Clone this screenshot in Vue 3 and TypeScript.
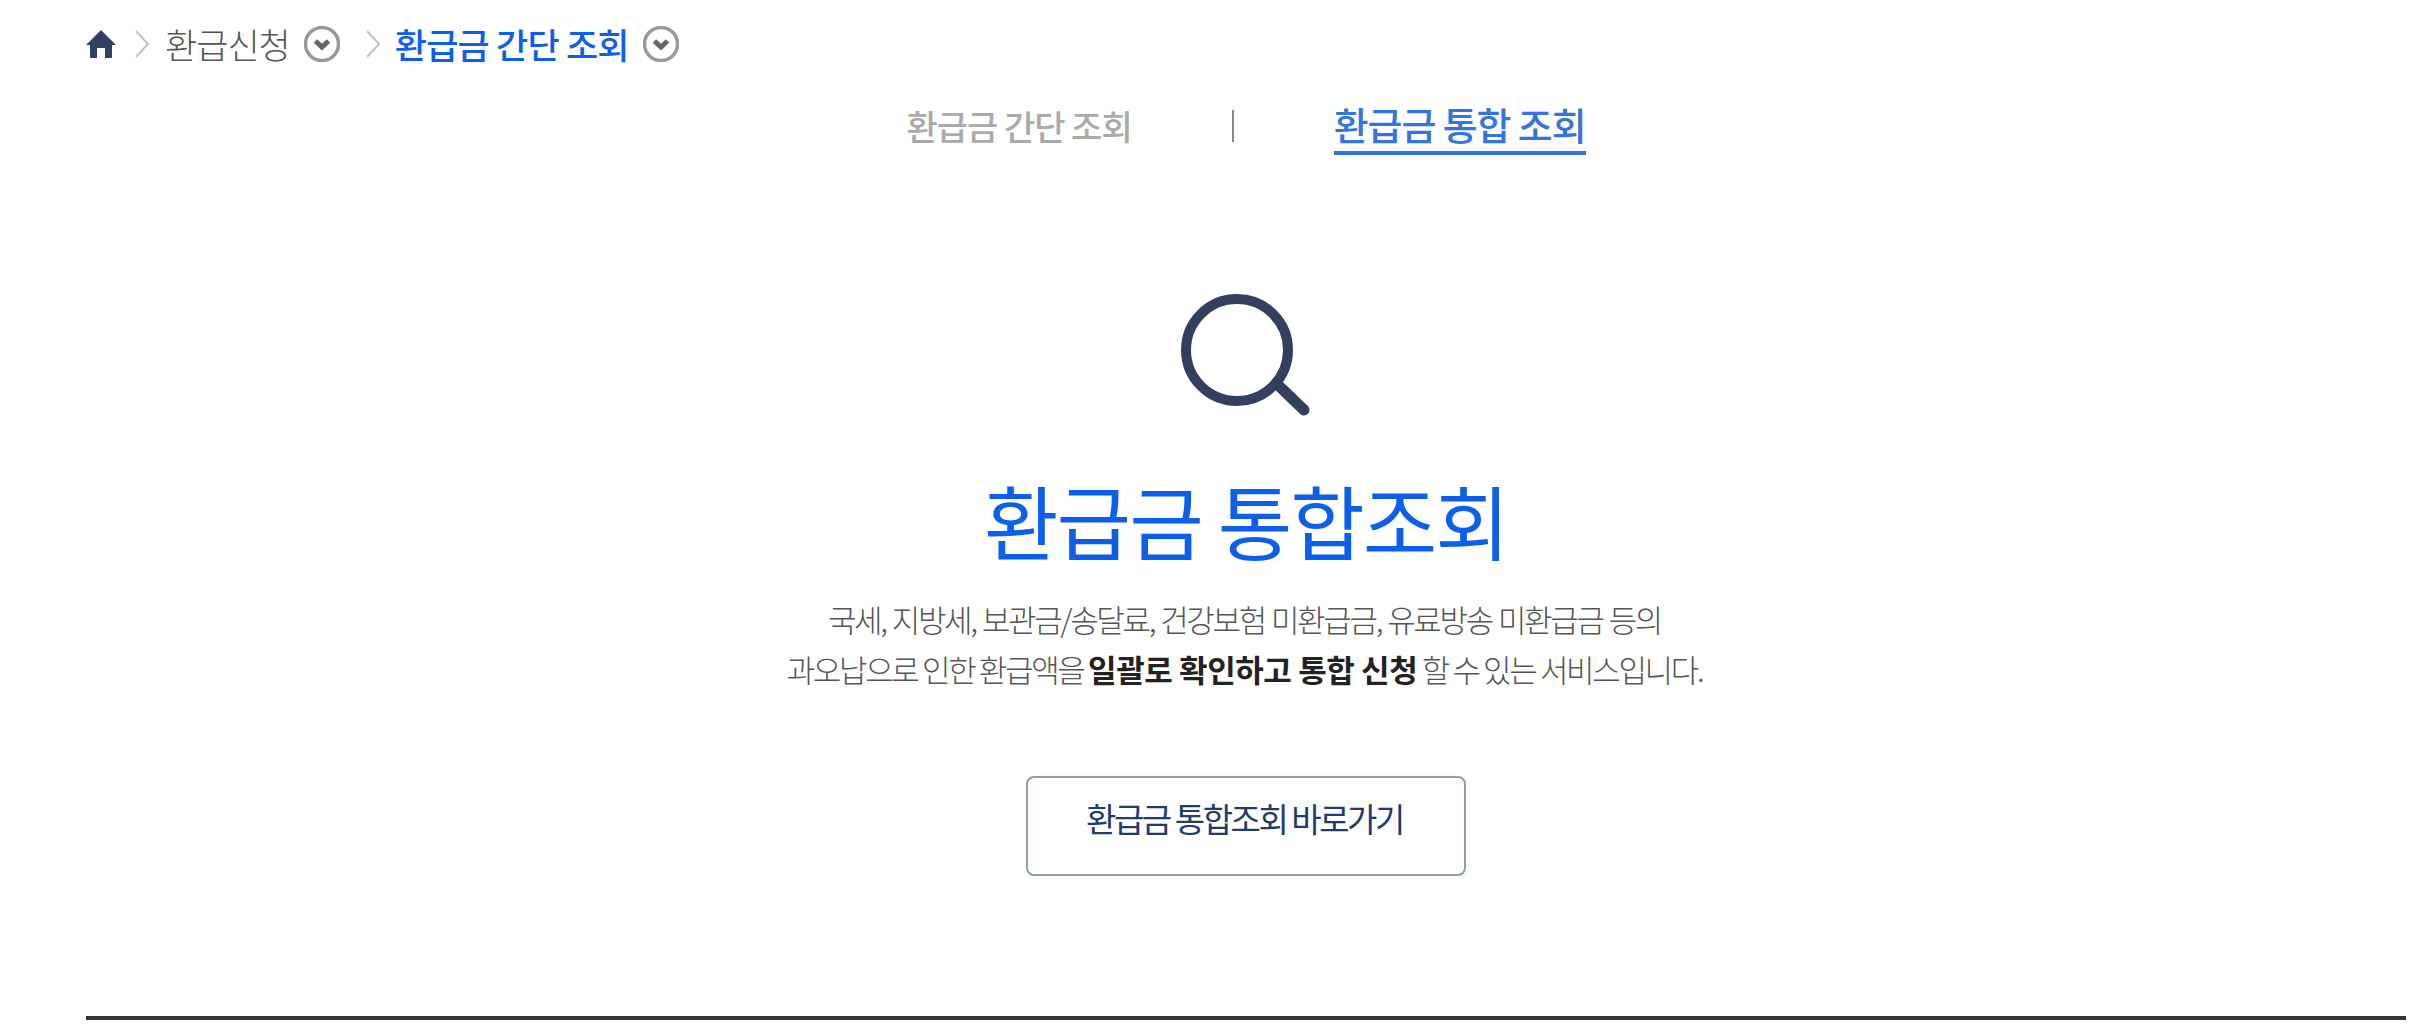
<script setup lang="ts">
// 환급금 통합조회 안내 화면
const lines = ['국세, 지방세, 보관금/송달료, 건강보험 미환급금, 유료방송 미환급금 등의']
</script>

<template>
  <div class="page">
    <nav class="crumbs">
      <svg class="home" viewBox="0 0 30 28" aria-label="홈">
        <path d="M15 0 L30 15 L26 15 L26 27 Q26 28 25 28 L19 28 L19 18 L11 18 L11 28 L5 28 Q4 28 4 27 L4 15 L0 15 Z" fill="#333f5f" />
      </svg>
      <svg class="sep" viewBox="0 0 16 30"><path d="M2 2 L14 15 L2 28" /></svg>
      <span class="crumb">환급신청</span>
      <svg class="drop" viewBox="0 0 36 36">
        <circle cx="18" cy="18" r="16.5" />
        <path d="M11.5 15 L18 21 L24.5 15" />
      </svg>
      <svg class="sep second" viewBox="0 0 16 30"><path d="M2 2 L14 15 L2 28" /></svg>
      <span class="crumb current">환급금 간단 조회</span>
      <svg class="drop" viewBox="0 0 36 36">
        <circle cx="18" cy="18" r="16.5" />
        <path d="M11.5 15 L18 21 L24.5 15" />
      </svg>
    </nav>

    <div class="tabs">
      <a class="tab">환급금 간단 조회</a>
      <i class="bar"></i>
      <a class="tab active">환급금 통합 조회</a>
    </div>

    <section class="intro">
      <svg class="glass" viewBox="0 0 130 122">
        <circle cx="56" cy="56" r="51" />
        <path class="handle" d="M97 91 L123 116" />
      </svg>
      <h1>환급금 통합조회</h1>
      <p>
        <span class="first">{{ lines[0] }}</span><br />
        과오납으로 인한 환급액을 <b>일괄로 확인하고 통합 신청</b> 할 수 있는 서비스입니다.
      </p>
      <button type="button">환급금 통합조회 바로가기</button>
    </section>

    <hr />
  </div>
</template>

<style>
html,
body {
  margin: 0;
  background: #fff;
}
</style>

<style scoped>
.page {
  box-sizing: border-box;
  width: 2432px;
  height: 1036px;
  padding: 22px 26px 0 86px;
  font-family: "Noto Sans CJK KR", "Noto Sans", sans-serif;
  display: flex;
  flex-direction: column;
}

.crumbs {
  display: flex;
  align-items: center;
  height: 44px;
}

.home {
  width: 30px;
  height: 28px;
}

.sep {
  width: 16px;
  height: 30px;
  margin: 0 15px 0 18px;
  fill: none;
  stroke: #c4c4c4;
  stroke-width: 2;
}

.sep.second {
  margin: 0 14px 0 25px;
}

.crumb {
  font-size: 35px;
  line-height: 44px;
  letter-spacing: -1px;
  color: #555;
  font-weight: 300;
}

.crumb.current {
  color: #0b5fe8;
  font-weight: 500;
  letter-spacing: -0.8px;
}

.drop {
  width: 36px;
  height: 36px;
  margin-left: 14px;
  fill: none;
  stroke: #999;
  stroke-width: 3.5;
}

.drop path {
  stroke: #666;
  stroke-width: 5;
}

.tabs {
  display: flex;
  justify-content: center;
  align-items: center;
  margin-top: 23px;
  height: 74px;
}

.tab {
  font-size: 34px;
  line-height: 44px;
  letter-spacing: -1px;
  color: #aaa;
  font-weight: 500;
}

.tab.active {
  font-size: 38px;
  letter-spacing: -1.1px;
  color: #3574dc;
  border-bottom: 4px solid #3574dc;
  padding-bottom: 5px;
  margin-bottom: -5px;
}

.bar {
  width: 2px;
  height: 32px;
  background: #888;
  margin: 0 100px;
}

.intro {
  display: flex;
  flex-direction: column;
  align-items: center;
}

.glass {
  width: 130px;
  height: 122px;
  margin-top: 131px;
  fill: none;
  stroke: #333f5f;
  stroke-width: 10;
  stroke-linecap: round;
}

.glass .handle {
  stroke-width: 11;
}

h1 {
  margin: 48px 0 0;
  font-size: 81px;
  line-height: 110px;
  font-weight: 400;
  letter-spacing: -2px;
  color: #0b5fe8;
}

p {
  margin: 20px 0 0;
  padding-right: 3px;
  font-size: 31px;
  line-height: 50px;
  font-weight: 300;
  letter-spacing: -2.35px;
  text-align: center;
  color: #555;
}

.first {
  word-spacing: 1.6px;
}

p b {
  font-weight: 700;
  letter-spacing: -0.4px;
  color: #222;
}

button {
  box-sizing: border-box;
  width: 440px;
  height: 100px;
  margin-top: 82px;
  padding: 0 3px 16px 0;
  background: #fff;
  border: 2px solid #8e9cbc;
  border-radius: 8px;
  font-family: inherit;
  font-size: 33px;
  font-weight: 400;
  letter-spacing: -2.45px;
  color: #223a70;
}

hr {
  width: 100%;
  height: 4px;
  margin: auto 0 16px;
  border: 0;
  background: #333;
}
</style>
